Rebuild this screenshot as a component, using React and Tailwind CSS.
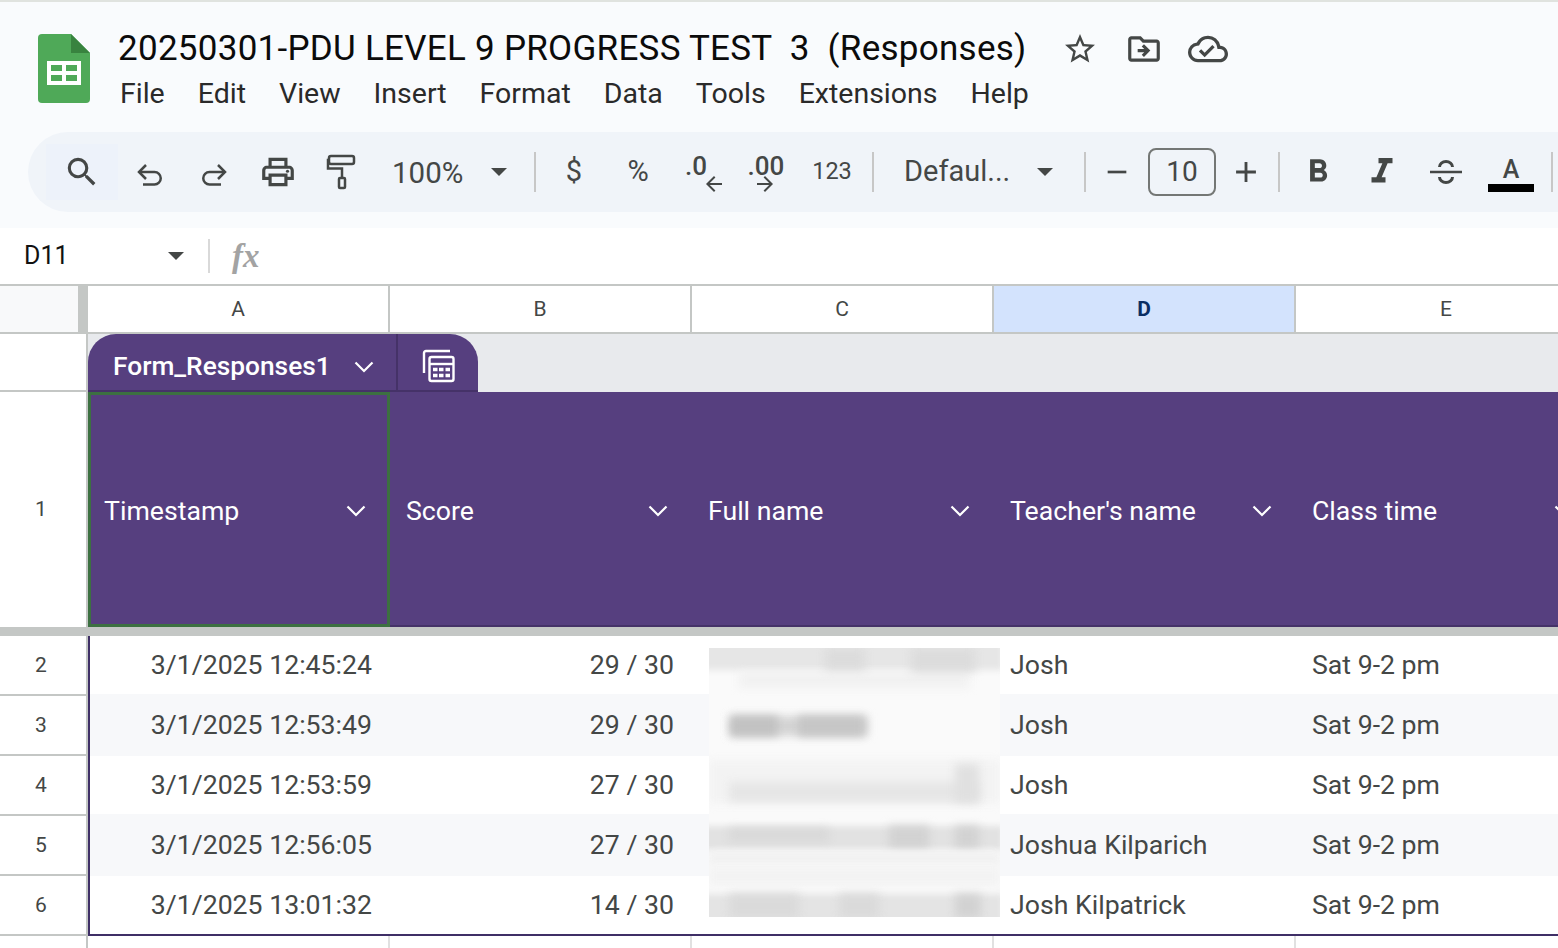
import {
  MdSearch,
  MdOutlinePrint,
  MdStarBorder,
  MdOutlineDriveFileMove,
  MdOutlineCloudDone,
  MdAdd,
  MdRemove,
  MdFormatBold,
  MdFormatItalic,
  MdArrowBack,
  MdArrowForward,
} from 'react-icons/md'

const menus = ['File', 'Edit', 'View', 'Insert', 'Format', 'Data', 'Tools', 'Extensions', 'Help']

const rows = [
  { n: 2, time: '3/1/2025 12:45:24', score: '29 / 30', teacher: 'Josh' },
  { n: 3, time: '3/1/2025 12:53:49', score: '29 / 30', teacher: 'Josh' },
  { n: 4, time: '3/1/2025 12:53:59', score: '27 / 30', teacher: 'Josh' },
  { n: 5, time: '3/1/2025 12:56:05', score: '27 / 30', teacher: 'Joshua Kilparich' },
  { n: 6, time: '3/1/2025 13:01:32', score: '14 / 30', teacher: 'Josh Kilpatrick' },
]

const headers = ['Timestamp', 'Score', 'Full name', "Teacher's name", 'Class time']

function SheetsLogo() {
  return (
    <svg width="52" height="70" viewBox="0 0 52 70" className="shrink-0">
      <path d="M4 0h29l19 19v46a4 4 0 0 1-4 4h-44a4 4 0 0 1-4-4v-61a4 4 0 0 1 4-4z" fill="#4fa958" />
      <path d="M33 0l19 19h-19z" fill="#38833f" />
      <path d="M9 27h34v24h-34z M13 31v6h11v-6z M28 31v6h11v-6z M13 41v6h11v-6z M28 41v6h11v-6z" fill="#fff" fillRule="evenodd" />
    </svg>
  )
}

function Caret() {
  return <span className="h-0 w-0 border-x-[8px] border-t-[8px] border-x-transparent border-t-[#444746]" />
}

function Divider() {
  return <div className="h-[40px] w-[2px] shrink-0 bg-[#c7c7c7]" />
}

function ToolBtn({ children, className = 'w-[64px]' }) {
  return <div className={`flex h-[64px] shrink-0 items-center justify-center text-[#444746] ${className}`}>{children}</div>
}

function Chevron({ className = '' }) {
  return (
    <svg width="20" height="12" viewBox="0 0 20 12" fill="none" stroke="#fff" strokeWidth="2.200" className={`shrink-0 ${className}`}>
      <path d="M1.500 1.500l8.500 8.500 8.500-8.500" />
    </svg>
  )
}

function UndoIcon({ flip = false }) {
  return (
    <svg width="28" height="26" viewBox="0 0 28 26" fill="none" stroke="#444746" strokeWidth="2.500" className={flip ? 'mt-[6px] -scale-x-100' : 'mt-[6px]'}>
      <path d="M3 10h15.500a6 6 0 0 1 0 12.500H7" />
      <path d="M10 3l-7 7 7 7" />
    </svg>
  )
}

function RollerIcon() {
  return (
    <svg width="30" height="36" viewBox="0 0 30 36" fill="none" stroke="#444746" strokeWidth="2.500" className="-ml-[2px]">
      <rect x="3" y="2" width="25" height="8" rx="2" />
      <path d="M3 6H2v8.500h14V24" />
      <rect x="13" y="24" width="6" height="10" rx="1" />
    </svg>
  )
}

function StrikeIcon() {
  return (
    <svg width="34" height="26" viewBox="0 0 34 26" fill="none" stroke="#444746" strokeWidth="2.500">
      <path d="M1 13h32" />
      <path d="M10.500 8a6.500 5.500 0 0 1 13 0" strokeWidth="3" />
      <path d="M10.500 18a6.500 5.500 0 0 0 13 0" strokeWidth="3" />
    </svg>
  )
}

function TabTableIcon() {
  return (
    <svg width="34" height="34" viewBox="0 0 34 34" fill="none" stroke="#fff" strokeWidth="2.400">
      <path d="M2 24V4a2 2 0 0 1 2-2h24" />
      <rect x="7.500" y="8" width="24" height="24" rx="2" />
      <path d="M7.500 15h24" />
      <path d="M11 20.500h4.500M17 20.500h4.500M23.500 20.500h4.500M11 26.500h4.500M17 26.500h4.500M23.500 26.500h4.500" strokeWidth="3.500" />
    </svg>
  )
}

function Redacted() {
  return (
    <div className="absolute left-[709px] top-[12px] h-[269px] w-[291px] overflow-hidden bg-[#fafafa]">
      <div className="absolute -left-[6px] -top-[6px] h-[28px] w-[300px] bg-[#e6e6e6] blur-[3px]" />
      <div className="absolute left-[30px] top-[24px] h-[16px] w-[230px] bg-[#f1f1f1] blur-[4px]" />
      <div className="absolute left-[116px] top-[0px] h-[22px] w-[40px] bg-[#dcdcdc] blur-[5px]" />
      <div className="absolute left-[202px] top-[0px] h-[24px] w-[64px] bg-[#dcdcdc] blur-[5px]" />
      <div className="absolute left-[21px] top-[68px] h-[20px] w-[138px] bg-[#d4d4d4] blur-[4px]" />
      <div className="absolute left-[21px] top-[68px] h-[20px] w-[48px] bg-[#c2c2c2] blur-[4px]" />
      <div className="absolute left-[89px] top-[68px] h-[20px] w-[66px] bg-[#c6c6c6] blur-[4px]" />
      <div className="absolute left-0 top-[112px] h-[44px] w-full bg-[#f3f3f3] blur-[4px]" />
      <div className="absolute left-[20px] top-[134px] h-[20px] w-[250px] bg-[#e6e6e6] blur-[4px]" />
      <div className="absolute left-[246px] top-[116px] h-[38px] w-[24px] bg-[#e0e0e0] blur-[5px]" />
      <div className="absolute left-[-6px] top-[178px] h-[24px] w-[300px] bg-[#e2e2e2] blur-[3px]" />
      <div className="absolute left-[20px] top-[180px] h-[14px] w-[100px] bg-[#d9d9d9] blur-[4px]" />
      <div className="absolute left-[180px] top-[178px] h-[22px] w-[40px] bg-[#d2d2d2] blur-[5px]" />
      <div className="absolute left-[246px] top-[178px] h-[22px] w-[24px] bg-[#d2d2d2] blur-[5px]" />
      <div className="absolute left-0 top-[203px] h-[14px] w-full bg-[#f2f2f2] blur-[3px]" />
      <div className="absolute left-0 top-[218px] h-[20px] w-full bg-[#f3f3f3] blur-[4px]" />
      <div className="absolute left-[-6px] top-[246px] h-[30px] w-[300px] bg-[#e4e4e4] blur-[3px]" />
      <div className="absolute left-[20px] top-[246px] h-[24px] w-[70px] bg-[#dadada] blur-[5px]" />
      <div className="absolute left-[130px] top-[246px] h-[24px] w-[40px] bg-[#dadada] blur-[5px]" />
      <div className="absolute left-[246px] top-[246px] h-[24px] w-[26px] bg-[#d2d2d2] blur-[5px]" />
    </div>
  )
}

export default function App() {
  return (
    <div className="h-[948px] w-[1558px] overflow-hidden bg-white font-['Roboto',sans-serif] text-[26.67px] text-[#444746]">
      <div className="h-[2px] bg-[#e0e3df]" />

      {/* Title and menu */}
      <div className="h-[226px] bg-[#f9fbfd]">
        <div className="flex h-[130px] items-start pl-[38px] pt-[32px]">
          <SheetsLogo />
          <div className="ml-[28px] -mt-[7px] flex flex-col">
            <div className="flex items-center">
              <span className="w-[944px] whitespace-pre text-[35px] leading-[44px] tracking-[0.27px] text-[#0b0b0b]">
                20250301-PDU LEVEL 9 PROGRESS TEST  3  (Responses)
              </span>
              <MdStarBorder size={36} className="text-[#444746]" />
              <MdOutlineDriveFileMove size={38} className="ml-[27px] text-[#444746]" />
              <MdOutlineCloudDone size={40} className="ml-[25px] text-[#444746]" />
            </div>
            <div className="ml-[2px] mt-[5px] flex gap-[33px] text-[28.5px] leading-[36px] text-[#2a2a2a]">
              {menus.map((m) => (
                <span key={m}>{m}</span>
              ))}
            </div>
          </div>
        </div>

        {/* Toolbar */}
        <div className="ml-[28px] flex h-[80px] items-center rounded-l-[40px] bg-[#f0f4f9] pl-[18px]">
          <div className="flex h-[56px] w-[72px] shrink-0 items-center justify-center bg-[#edf2fa]">
            <MdSearch size={38} />
          </div>
          <ToolBtn><UndoIcon /></ToolBtn>
          <ToolBtn><UndoIcon flip /></ToolBtn>
          <ToolBtn><MdOutlinePrint size={38} /></ToolBtn>
          <ToolBtn><RollerIcon /></ToolBtn>
          <ToolBtn className="w-[160px] justify-start pl-[18px]">
            <span className="mt-[2px] text-[29.500px]">100%</span>
            <span className="ml-[28px] flex"><Caret /></span>
          </ToolBtn>
          <Divider />
          <ToolBtn className="w-[76px]"><span className="text-[29px]">$</span></ToolBtn>
          <ToolBtn className="w-[52px]"><span className="text-[29px]">%</span></ToolBtn>
          <ToolBtn className="relative w-[76px]">
            <span className="-ml-[12px] -mt-[12px] text-[26px] font-medium">.0</span>
            <MdArrowBack size={24} className="absolute left-[38px] top-[32px]" />
          </ToolBtn>
          <ToolBtn className="relative w-[52px]">
            <span className="-mt-[12px] text-[26px] font-medium">.00</span>
            <MdArrowForward size={24} className="absolute left-[13px] top-[32px]" />
          </ToolBtn>
          <ToolBtn className="w-[80px]"><span className="text-[23.500px]">123</span></ToolBtn>
          <Divider />
          <ToolBtn className="w-[210px] justify-start pl-[30px]">
            <span className="text-[29px]">Defaul...</span>
            <span className="ml-[27px] flex"><Caret /></span>
          </ToolBtn>
          <Divider />
          <ToolBtn className="w-[62px]"><MdRemove size={32} /></ToolBtn>
          <div className="flex h-[48px] w-[68px] shrink-0 items-center justify-center rounded-[8px] border-2 border-[#747775] text-[28px]">10</div>
          <ToolBtn className="w-[60px]"><MdAdd size={34} /></ToolBtn>
          <span className="ml-[2px] flex"><Divider /></span>
          <ToolBtn className="w-[76px]"><MdFormatBold size={38} /></ToolBtn>
          <ToolBtn className="w-[52px]"><MdFormatItalic size={42} /></ToolBtn>
          <ToolBtn className="w-[76px]"><StrikeIcon /></ToolBtn>
          <ToolBtn className="w-[54px]">
            <div className="mt-[5px] flex flex-col items-center">
              <span className="text-[25px] font-medium leading-[24px]">A</span>
              <div className="mt-[2px] h-[8px] w-[46px] bg-black" />
            </div>
          </ToolBtn>
          <span className="ml-[13px] flex"><Divider /></span>
        </div>
      </div>

      {/* Formula bar */}
      <div className="flex h-[56px] items-center bg-white">
        <span className="w-[168px] shrink-0 pl-[24px] text-[25px] text-[#111]">D11</span>
        <Caret />
        <div className="ml-[24px] h-[34px] w-[2px] bg-[#d9d9d9]" />
        <span className="ml-[22px] font-['Liberation_Serif',serif] text-[33px] font-bold italic leading-[40px] text-[#a3a3a3]">fx</span>
      </div>

      {/* Column letters */}
      <div className="flex h-[50px] border-y-2 border-[#c4c7c5] pt-[1px] text-[21px] text-[#444746]">
        <div className="-mt-[1px] w-[78px] shrink-0 bg-[#f8f9fa]" />
        <div className="-mt-[1px] w-[10px] shrink-0 bg-[#c4c7c5]" />
        {['A', 'B', 'C', 'D', 'E'].map((c) => (
          <div
            key={c}
            className={
              c === 'D'
                ? '-mt-[1px] flex w-[302px] shrink-0 items-center justify-center border-r-2 border-[#c4c7c5] bg-[#d3e3fd] pt-[1px] font-bold text-[#0b2e63]'
                : '-mt-[1px] flex w-[302px] shrink-0 items-center justify-center border-r-2 border-[#c4c7c5] pt-[1px]'
            }
          >
            {c}
          </div>
        ))}
      </div>

      {/* Table tab */}
      <div className="flex h-[58px]">
        <div className="w-[88px] shrink-0 border-b-2 border-r-2 border-[#c4c7c5]" />
        <div className="flex flex-1 bg-[#e8eaed]">
          <div className="flex h-[58px] w-[390px] shrink-0 rounded-t-[28px] border-b-2 border-[#453268] bg-[#563f7f] text-white">
            <div className="flex w-[310px] items-center border-r-2 border-[#453268] pl-[25px] pt-[10px]">
              <span className="w-[241px] text-[26.300px] font-medium">Form_Responses1</span>
              <Chevron />
            </div>
            <div className="flex flex-1 items-center justify-center pl-[2px] pt-[7px]">
              <TabTableIcon />
            </div>
          </div>
        </div>
      </div>

      {/* Frozen header row */}
      <div className="flex h-[235px]">
        <div className="flex w-[88px] shrink-0 items-center justify-center border-r-2 border-[#c4c7c5] pr-[4px] text-[21px]">1</div>
        <div className="flex flex-1 border-b-2 border-[#453268] bg-[#563f7f] text-white">
          {headers.map((h, i) => (
            <div
              key={h}
              className={
                i === 0
                  ? '-mb-[2px] flex w-[302px] shrink-0 items-center justify-between border-[3px] border-[#3c7041] pl-[13px] pr-[21px] pt-[2px]'
                  : 'flex w-[302px] shrink-0 items-center justify-between pl-[16px] pr-[24px] pt-[4px]'
              }
            >
              <span>{h}</span>
              <Chevron className="mt-[1px]" />
            </div>
          ))}
        </div>
      </div>

      <div className="h-[9px] bg-[#c4c7c5]" />

      {/* Data rows */}
      <div className="relative flex">
        <div className="w-[88px] shrink-0 border-r-2 border-[#c4c7c5] text-[21px]">
          {rows.map((r) => (
            <div key={r.n} className="flex h-[60px] items-center justify-center border-b-2 border-[#c4c7c5] pr-[4px] pt-[2px]">{r.n}</div>
          ))}
          <div className="flex h-[12px] justify-center overflow-hidden pr-[4px] pt-[9px]">7</div>
        </div>

        <div className="flex-1">
          <div className="border-b-2 border-l-2 border-[#3f2f66]">
            {rows.map((r) => (
              <div key={r.n} className={r.n % 2 === 1 ? 'flex h-[62px] bg-[#f7f8fa]' : 'flex h-[58px] bg-white'}>
                <div className="flex w-[300px] shrink-0 items-center justify-end pr-[18px]">{r.time}</div>
                <div className="flex w-[302px] shrink-0 items-center justify-end pr-[18px]">{r.score}</div>
                <div className="w-[302px] shrink-0" />
                <div className="flex w-[302px] shrink-0 items-center pl-[16px]">{r.teacher}</div>
                <div className="flex w-[302px] shrink-0 items-center pl-[16px]">Sat 9-2 pm</div>
              </div>
            ))}
          </div>
          {/* Empty grid below the table */}
          <div className="flex h-[12px]">
            {[0, 1, 2, 3].map((c) => (
              <div key={c} className="w-[302px] shrink-0 border-r-2 border-[#e1e1e1]" />
            ))}
          </div>
        </div>

        <Redacted />
      </div>
    </div>
  )
}
